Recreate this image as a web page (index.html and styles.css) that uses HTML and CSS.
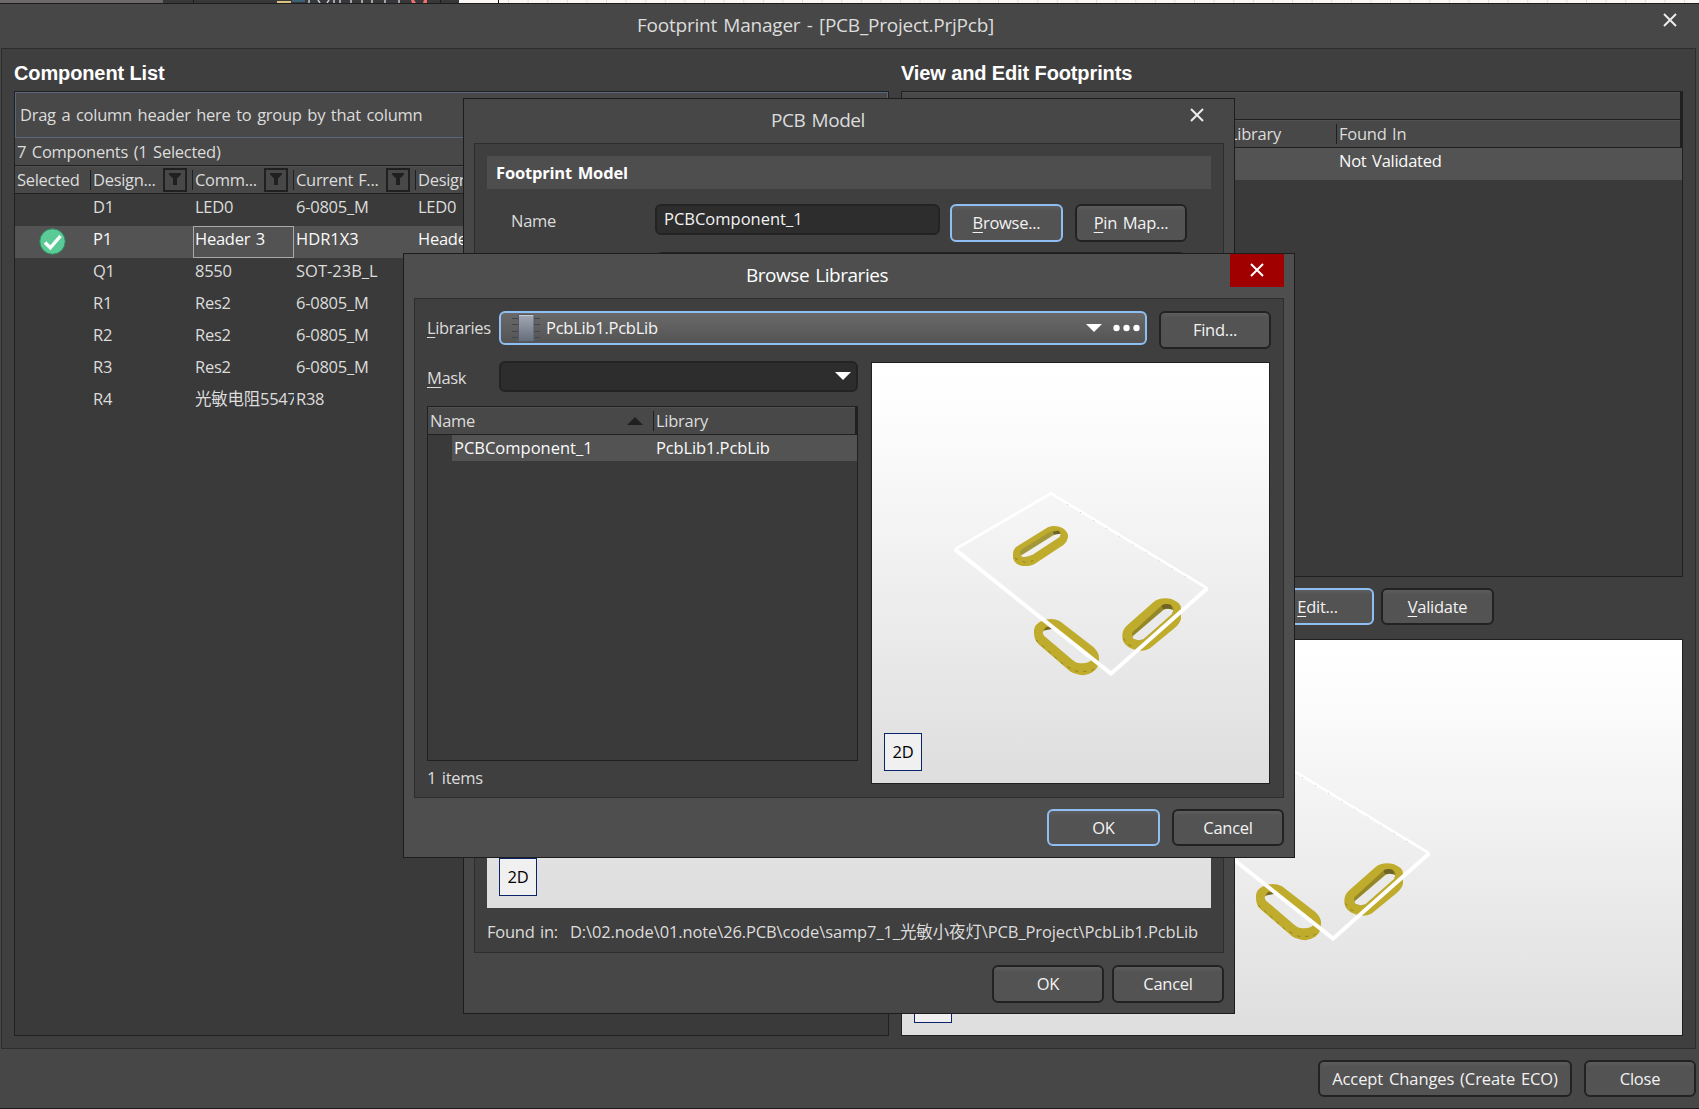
FILE: index.html
```html
<!DOCTYPE html>
<html lang="en">
<head>
<meta charset="utf-8">
<title>Footprint Manager</title>
<link rel="stylesheet" href="styles.css">
</head>
<body>
<svg width="0" height="0" class="defs">
  <defs>
    <linearGradient id="chipFill" x1="0" y1="0" x2="0" y2="1"><stop offset="0" stop-color="#a3a8b3"/><stop offset="1" stop-color="#656d7b"/></linearGradient>
    <symbol id="cross" viewBox="0 0 14 14"><path d="M1 1L13 13M13 1L1 13" fill="none" stroke="currentColor" stroke-width="2"/></symbol>
    <symbol id="funnel" viewBox="0 0 12 13"><path d="M0 0H12V1.6L8 5.4V12H4V5.4L0 1.6Z" fill="#202020"/></symbol>
    <g id="board" transform="translate(-12 107) scale(.33333)">
      <path fill="#c0ac2c" d="M459 250Q459 236 474 227L560 174C585 160 620 172 624 196Q625 212 610 225L525 281C505 293 462 292 459 262Z"/>
      <path fill="#a39839" d="M480 246Q480 241 488 236L568 187Q580 180 593 181Q606 184 600 197L520 253Q500 263 487 260Q480 256 480 246Z"/>
      <path fill="#6e6322" d="M579 185L597 182L600 192L582 194Z"/>
      <path fill="#f0f0f0" d="M482 257L580 196Q592 191 602 192L599 201L520 253Q500 263 487 260Z"/>
      <path fill="#c0ac2c" d="M787 495Q788 478 800 467L880 397C895 382 930 380 950 395Q965 403 963 420L963 446Q960 460 945 473L870 535C855 545 835 543 820 538C800 530 786 520 787 495Z"/>
      <path fill="#948728" d="M816 488L903 408Q914 400 930 404Q946 411 938 428L850 508Q832 514 818 505Z"/>
      <path fill="#6e6322" d="M905 406Q918 399 933 405L936 418L908 416Z"/>
      <path fill="#eaeaea" d="M818 499L910 420Q925 412 940 421L936 432L850 508Q832 514 818 505Z"/>
      <path fill="#c0ac2c" d="M522 480Q524 462 545 453Q575 440 600 454L700 531Q720 550 717 568L714 588Q705 610 670 616Q645 613 630 604L535 522Q520 508 522 480Z"/>
      <path fill="#eaeaea" d="M548 489Q550 474 575 473L600 484L694 570Q680 584 652 578Q645 577 635 568L552 497Z"/>
      <path fill="#766a24" d="M549 483L558 471L577 470L576 477L556 481Z"/>
      <path fill="none" stroke="#766a24" stroke-width="2" stroke-dasharray="9 16" d="M528 510L612 585L650 604H690L712 590M465 265L495 277L520 272M790 505L805 524L825 530"/>
      <path fill="none" stroke="#fff" stroke-width="8" d="M285 238L573 70L1042 355"/>
      <path fill="none" stroke="#fff" stroke-width="12" d="M285 238L753 611L1042 355"/>
      <path fill="none" stroke="#aaa" stroke-width="2" stroke-dasharray="3 43" d="M621 103L1010 340"/>
    </g>
  </defs>
</svg>

<div class="desktop">
  <svg class="behind" width="1699" height="3" viewBox="0 0 1699 3">
    <rect width="1699" height="3" fill="#38383a"/><rect width="163" height="3" fill="#6d6969"/><rect x="193" width="1" height="3" fill="#1c1c1c"/>
    <rect x="277" y="1" width="14" height="2" fill="#d8c27c"/><path d="M292 0h13v2h-13z" fill="#3c6076"/>
    <path d="M309 0v3M318 0l2 3M327 3l2-3M334 0v3M340 0v3M351 0v3M362 0v3M372 0v3M385 0v3M399 0v3" stroke="#c9ccd0" stroke-width="1.5"/>
    <path d="M411 0h3l2 3h-4zM424 0h3v3h-4z" fill="#f07070"/><rect x="440" width="1" height="3" fill="#1c1c1c"/>
    <rect x="459" width="1240" height="3" fill="#fbf7f4"/><rect x="498" width="1" height="3" fill="#111"/>
    <path d="M508 1.5H1699" stroke="#e3dfdc" stroke-width="3" stroke-dasharray="1 18.6"/>
  </svg>

  <section class="window manager">
    <header class="titlebar"><h1>Footprint Manager - [PCB_Project.PrjPcb]</h1><button class="close"><svg width="14" height="14"><use href="#cross"/></svg></button></header>
    <div class="panel columns">
      <div class="column list-column">
        <h2>Component List</h2>
        <div class="grid components">
          <div class="group-box">Drag a column header here to group by that column</div>
          <div class="count">7 Components (1 Selected)</div>
          <div class="row head">
            <span class="sep">Selected</span>
            <span class="sep">Design...<i class="filter"><svg width="12" height="13"><use href="#funnel"/></svg></i></span>
            <span class="sep">Comm...<i class="filter"><svg width="12" height="13"><use href="#funnel"/></svg></i></span>
            <span class="sep">Current F...<i class="filter"><svg width="12" height="13"><use href="#funnel"/></svg></i></span>
            <span>Design...</span>
          </div>
          <div class="row"><span></span><span>D1</span><span>LED0</span><span>6-0805_M</span><span>LED0</span></div>
          <div class="row selected"><span class="tick"><svg width="27" height="27" viewBox="0 0 27 27"><circle cx="13.5" cy="13.5" r="12.7" fill="#5acb96" stroke="#2f8c62"/><path d="M6 14.5L11.3 19.8L21.5 8" fill="none" stroke="#fff" stroke-width="3.4"/></svg></span><span>P1</span><span class="focus">Header 3</span><span class="code">HDR1X3</span><span>Header 3</span></div>
          <div class="row"><span></span><span>Q1</span><span>8550</span><span class="code">SOT-23B_L</span><span></span></div>
          <div class="row"><span></span><span>R1</span><span>Res2</span><span>6-0805_M</span><span></span></div>
          <div class="row"><span></span><span>R2</span><span>Res2</span><span>6-0805_M</span><span></span></div>
          <div class="row"><span></span><span>R3</span><span>Res2</span><span>6-0805_M</span><span></span></div>
          <div class="row"><span></span><span>R4</span><span>光敏电阻5547</span><span>R38</span><span></span></div>
        </div>
      </div>
      <div class="column view-column">
        <h2>View and Edit Footprints</h2>
        <div class="grid footprints">
          <div class="band"></div>
          <div class="frow head"><span></span><span class="sep">Library</span><span>Found In</span></div>
          <div class="frow selected"><span></span><span></span><span>Not Validated</span></div>
        </div>
        <div class="actions"><button class="btn default"><span><u>E</u>dit...</span></button><button class="btn validate"><span><u>V</u>alidate</span></button></div>
        <div class="preview main-preview"><svg width="780" height="395" viewBox="-192 12 780 395"><use href="#board"/></svg><button class="mode">2D</button></div>
      </div>
    </div>
    <footer class="footer"><button class="btn wide">Accept Changes (Create ECO)</button><button class="btn">Close</button></footer>
  </section>

  <section class="window model">
    <header class="titlebar"><h1>PCB Model</h1><button class="close"><svg width="14" height="14"><use href="#cross"/></svg></button></header>
    <div class="panel model-panel">
      <h3>Footprint Model</h3>
      <div class="name-row"><label>Name</label><div class="field code">PCBComponent_1</div><button class="btn default"><span><u>B</u>rowse...</span></button><button class="btn"><span><u>P</u>in Map...</span></button></div>
      <div class="field description"></div>
      <div class="model-preview"><button class="mode">2D</button></div>
      <p class="found"><span>Found in:</span><span class="path">D:\02.node\01.note\26.PCB\code\samp7_1_光敏小夜灯\PCB_Project\PcbLib1.PcbLib</span></p>
    </div>
    <footer class="footer"><button class="btn">OK</button><button class="btn">Cancel</button></footer>
  </section>

  <section class="window browse">
    <header class="titlebar"><h1>Browse Libraries</h1><button class="close hot"><svg width="14" height="14"><use href="#cross"/></svg></button></header>
    <div class="panel browse-panel">
      <div class="lib-row">
        <label><u>L</u>ibraries</label>
        <div class="combo">
          <svg width="28" height="28" viewBox="0 0 28 28"><path d="M0 4.5H28M0 10.5H28M0 17.5H28M0 23.5H28" stroke="#41464e"/><path d="M6.500.5h15.500v27h-15.500z" fill="url(#chipFill)" stroke="#535a66"/><path d="M7 1.500h14.500" stroke="#c6cad2"/></svg>
          <span>PcbLib1.PcbLib</span>
          <svg class="arrow" width="16" height="8"><path d="M0 0H16L8 8Z" fill="#fff"/></svg>
          <svg width="27" height="8"><g fill="#fff"><circle cx="3.500" cy="4" r="3.200"/><circle cx="13.500" cy="4" r="3.200"/><circle cx="23.500" cy="4" r="3.200"/></g></svg>
        </div>
        <button class="btn">Find...</button>
      </div>
      <div class="browse-body">
        <div class="browse-left">
          <div class="mask-row"><label><u>M</u>ask</label><div class="field mask"><svg width="16" height="8"><path d="M0 0H16L8 8Z" fill="#fff"/></svg></div></div>
          <div class="grid libs">
            <div class="lrow head"><span class="sep">Name<svg width="16" height="8"><path d="M0 8L8 0L16 8Z" fill="#202020"/></svg></span><span>Library</span></div>
            <div class="lrow item"><span class="code">PCBComponent_1</span><span class="path">PcbLib1.PcbLib</span></div>
          </div>
          <div class="items">1 items</div>
        </div>
        <div class="preview browse-preview"><svg width="397" height="420" viewBox="0 0 397 420"><use href="#board"/></svg><button class="mode">2D</button></div>
      </div>
    </div>
    <footer class="footer"><button class="btn default">OK</button><button class="btn">Cancel</button></footer>
  </section>
</div>
</body>
</html>
```
FILE: styles.css
```css
* { box-sizing: border-box; margin: 0; padding: 0; }
body { width: 1699px; height: 1109px; overflow: hidden; background: #474747; color: #dcdcdc; font: 16.5px/26px "Open Sans", "Noto Sans", "Noto Sans CJK SC", sans-serif; letter-spacing: -0.26px; word-spacing: 1.6px; }
button { font: inherit; letter-spacing: inherit; word-spacing: inherit; color: inherit; border: 0; background: none; }
svg { display: block; flex: none; }
u { text-decoration-thickness: 1px; text-underline-offset: 3px; }
.defs { position: absolute; }
.desktop { position: relative; width: 1699px; height: 1109px; overflow: hidden; }
.behind { height: 3px; }
.code { letter-spacing: 0; }
.path { letter-spacing: -0.12px; }

.window { position: absolute; display: flex; flex-direction: column; background: #474747; border: 1px solid #1d1d1d; }
.manager { left: 0; top: 3px; width: 1699px; height: 1106px; border-width: 1px 0; }
.model { left: 463px; top: 98px; width: 772px; height: 916px; }
.browse { left: 403px; top: 253px; width: 892px; height: 605px; background: #4e4e4e; }

.titlebar { display: flex; flex: none; height: 44px; padding-right: 10px; }
.titlebar h1 { flex: 1; text-align: center; font-size: 19px; font-weight: 400; line-height: 43px; letter-spacing: -0.45px; }
.close { width: 54px; height: 33px; padding-bottom: 1px; display: flex; align-items: center; justify-content: center; color: #ececec; }
.hot { background: #a00000; color: #fff; }
.manager .titlebar { padding-right: 2px; }
.manager .close { padding: 0 1px 2px 0; }
.model .close { padding-bottom: 2px; }
.manager h1 { padding-right: 12px; letter-spacing: -0.22px; }
.model h1 { padding-left: 2px; }
.browse h1 { color: #fff; }

.panel { flex: none; margin: 0 10px; border: 1px solid #2d2d2d; background: #3f3f3f; }
.footer { display: flex; justify-content: flex-end; gap: 12px; padding: 11px 10px 0; }
.btn { flex: none; width: 112px; height: 37px; border: 2px solid #222; border-radius: 6px; background: linear-gradient(#5d5d5d, #535353 5px); color: #f2f2f2; line-height: 33px; text-align: center; }
.default { border-color: #8fbff2; width: 113px; }
.mode { width: 38px; height: 38px; border: 1px solid #0a246a; background: #f0f0f0; color: #000; line-height: 36px; }
.field { border: 2px solid #232323; border-radius: 6px; background: #2d2d2d; color: #f2f2f2; height: 31px; }

.grid { border: 1px solid #202020; background: #3a3a3a; overflow: hidden; }
.head { background: #484848; border-bottom: 1px solid #202020; box-shadow: inset 0 1px #515151; }
.sep { background: linear-gradient(#202020, #202020) right center / 1px 20px no-repeat; }
.selected { background: #535353; color: #fafafa; }

.columns { display: flex; gap: 12px; height: 1001px; margin: 0 3px 0 1px; padding: 0 12px; }
.column { display: flex; flex-direction: column; }
.list-column { width: 875px; }
.view-column { width: 782px; }
.column h2 { height: 42px; padding-top: 6px; font: bold 20px/36px "Liberation Sans", Arial, sans-serif; letter-spacing: -0.12px; word-spacing: 0; color: #fff; white-space: nowrap; }
.components { height: 945px; }
.group-box { height: 46px; padding-left: 4px; border: 1px solid #56677f; background: #484848; line-height: 44px; }
.count { height: 28px; padding-left: 2px; background: #484848; border-bottom: 1px solid #202020; line-height: 27px; }
.row { display: grid; grid-template-columns: 76px 102px 101px 122px 1fr; height: 32px; }
.row > span { padding-left: 2px; white-space: nowrap; overflow: hidden; }
.row.head { height: 28px; line-height: 27px; letter-spacing: -0.3px; word-spacing: 1px; }
.row.head > span { display: flex; justify-content: space-between; align-items: center; padding-right: 6px; }
.filter { display: flex; align-items: center; justify-content: center; width: 24px; height: 24px; border: 2px solid #202020; }
.row > .tick { padding: 2px 0 0 24px; }
.row > .focus { border: 1px solid #a9a9a9; padding-left: 1px; line-height: 24px; }

.footprints { height: 486px; }
.band { height: 28px; background: #484848; border-bottom: 1px solid #202020; border-right: 2px solid #202020; box-shadow: inset 0 1px #515151; }
.frow { display: grid; grid-template-columns: 326px 109px 1fr; height: 32px; }
.frow > span { padding-left: 2px; }
.frow > .sep { padding-left: 1px; }
.frow.head { height: 28px; line-height: 27px; border-right: 2px solid #202020; }
.actions { display: flex; gap: 7px; margin: 11px 0 14px; padding-left: 360px; }
.actions .validate { width: 113px; }
.preview { position: relative; border: 1px solid #202020; background: linear-gradient(#fff, #fdfdfd 12%, #dedede); }
.main-preview { height: 397px; }
.preview .mode { position: absolute; left: 12px; bottom: 12px; }
.wide { width: 254px; letter-spacing: -0.08px; }
.manager .footer { padding-right: 3px; }

.model-panel { height: 810px; padding: 12px; }
.model-panel h3 { height: 33px; padding-left: 9px; background: #4e4e4e; color: #fff; font-size: 16.5px; font-weight: 700; line-height: 33px; letter-spacing: -0.18px; }
.name-row { display: flex; margin-top: 15px; padding-left: 24px; height: 38px; }
.name-row label { width: 144px; line-height: 33px; }
.name-row .field { width: 285px; padding-left: 7px; line-height: 26px; }
.name-row .btn { height: 38px; margin-left: 10px; }
.name-row .btn + .btn { margin-left: 12px; }
.description { margin: 10px 25px 0 169px; }
.model-preview { display: flex; align-items: flex-end; height: 510px; margin-top: 115px; padding: 12px; background: linear-gradient(#fff, #dedede); }
.found { display: flex; margin-top: 11px; white-space: nowrap; }
.found .path { margin-left: 12px; }
.model .footer { gap: 8px; padding-top: 12px; }
.model .footer .btn, .name-row .btn, .lib-row .btn { height: 38px; padding-bottom: 2px; }

.browse-panel { height: 500px; padding: 12px; }
.lib-row { display: flex; height: 38px; }
.lib-row label, .mask-row label { width: 72px; flex: none; line-height: 34px; letter-spacing: -0.35px; }
.combo { display: flex; align-items: center; width: 648px; height: 34px; margin-right: 12px; padding: 0 5px 0 11px; border: 2px solid #8fbff2; border-radius: 6px; background: linear-gradient(#696969, #545454); color: #f4f4f4; }
.combo span { margin-left: 6px; flex: 1; }
.combo .arrow { margin-right: 11px; }
.browse-body { display: flex; justify-content: space-between; margin-top: 12px; }
.browse-left { width: 431px; }
.mask-row { display: flex; height: 45px; }
.mask { flex: 1; display: flex; justify-content: flex-end; align-items: center; padding: 0 5px 1px 0; }
.libs { height: 355px; }
.lrow { display: grid; grid-template-columns: 226px 1fr; height: 28px; line-height: 27px; }
.lrow span { padding-left: 2px; }
.lrow.head { border-right: 2px solid #202020; }
.lrow .sep { display: flex; justify-content: space-between; align-items: center; padding-right: 11px; }
.item { grid-template-columns: 202px 1fr; height: 26px; margin-left: 24px; line-height: 26px; background: #535353; color: #fafafa; }
.items { padding-top: 4px; }
.browse-preview { width: 399px; height: 422px; margin: 1px 1px 0 0; }
```
